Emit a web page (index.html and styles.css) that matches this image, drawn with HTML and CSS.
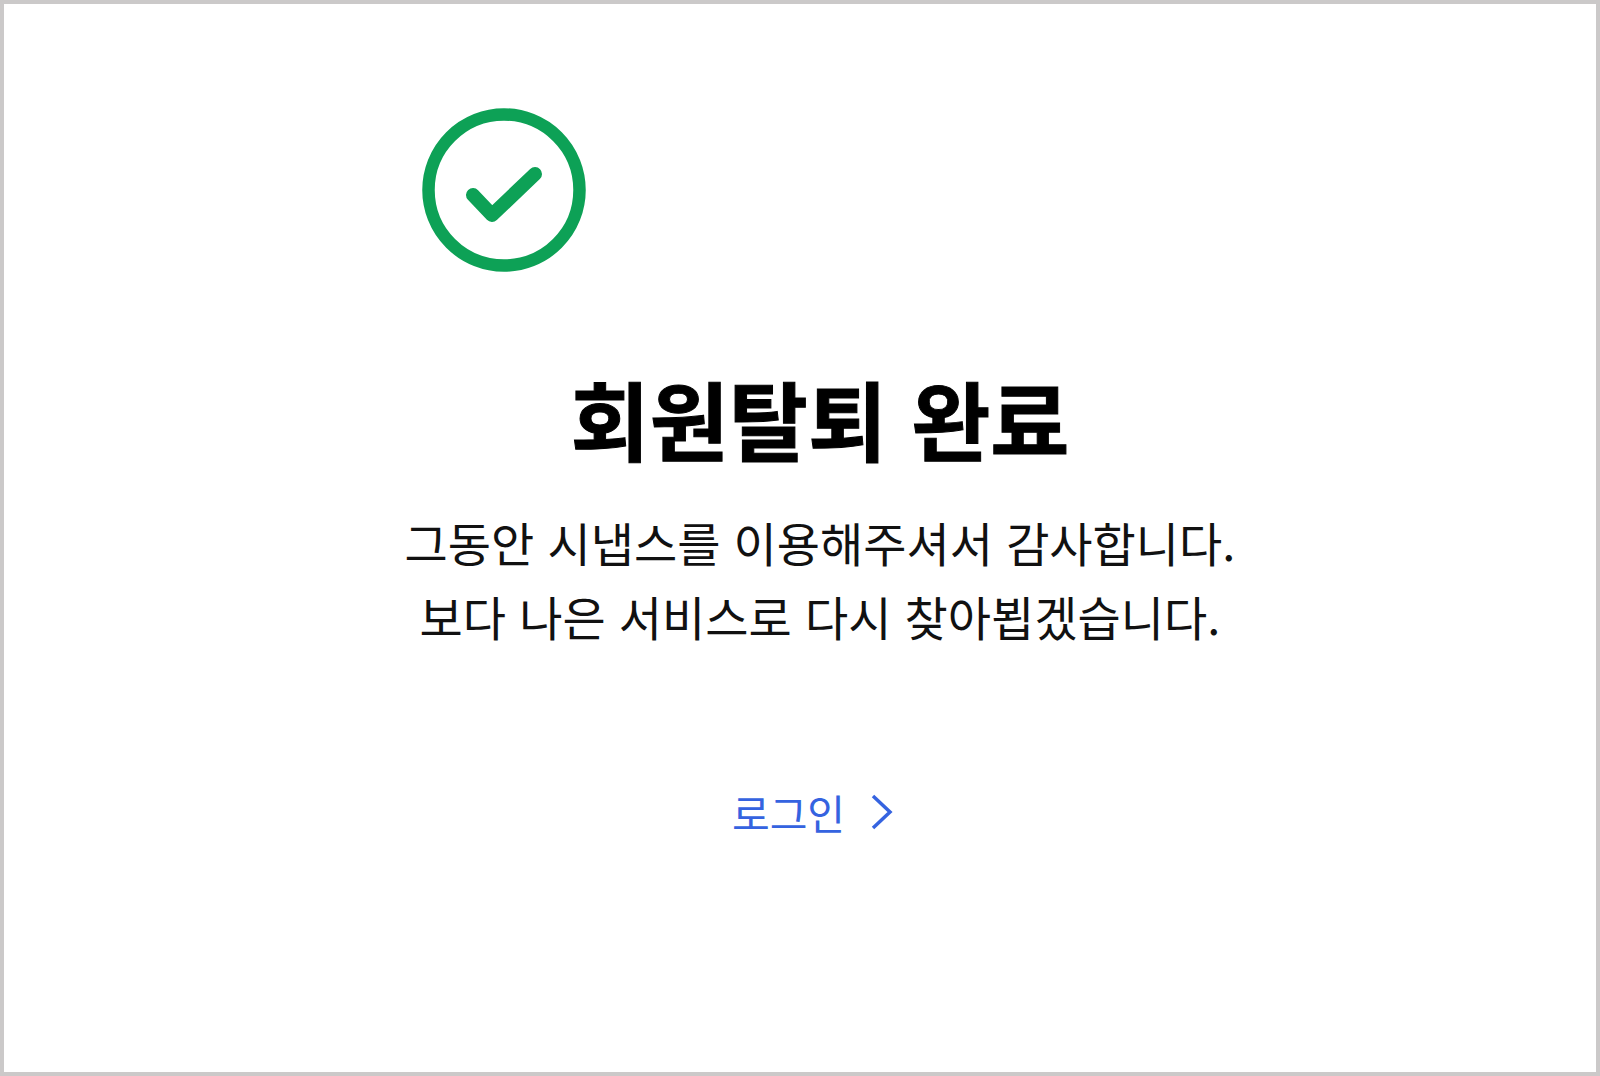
FILE: index.html
```html
<!DOCTYPE html>
<html lang="ko">
<head>
  <meta charset="UTF-8">
  <meta name="viewport" content="width=device-width, initial-scale=1.0">
  <title>회원탈퇴 완료</title>
  <link rel="stylesheet" href="styles.css">
</head>
<body>
  <main class="frame">
    <div class="icon-row">
      <svg class="check-icon" viewBox="0 0 164 164" aria-hidden="true">
        <circle cx="82" cy="82" r="75.5" fill="none" stroke="#0da156" stroke-width="12.5"/>
        <path d="M51 87 L70 107 L113 66" fill="none" stroke="#0da156" stroke-width="14" stroke-linecap="round" stroke-linejoin="round"/>
      </svg>
    </div>
    <h1 class="title">회원탈퇴 완료</h1>
    <p class="message">그동안 시냅스를 이용해주셔서 감사합니다.<br>보다 나은 서비스로 다시 찾아뵙겠습니다.</p>
    <a class="login-link" href="#">
      <span>로그인</span>
      <svg class="chevron" viewBox="0 0 24 38" aria-hidden="true">
        <path d="M3 3 L20 19 L3 35" fill="none" stroke="#3563e0" stroke-width="3.5"/>
      </svg>
    </a>
  </main>
</body>
</html>
```
FILE: styles.css
```css
* {
  box-sizing: border-box;
}
html, body {
  height: 100%;
}
body {
  margin: 0;
  font-family: "Noto Sans CJK KR", "Noto Sans", sans-serif;
  background-color: #fff;
  color: #111;
}
.frame {
  height: 100%;
  border: 4px solid #cbc9c9;
  padding: 104px 0 0 40px;
  display: flex;
  flex-direction: column;
  align-items: center;
}
.icon-row {
  width: 100%;
  padding-left: 378px;
}
.check-icon {
  display: block;
  width: 164px;
  height: 164px;
}
.title {
  margin: 82px 0 0;
  font-size: 86px;
  font-weight: 700;
  -webkit-text-stroke: 1px #000;
  line-height: 128px;
  color: #000;
}
.message {
  margin: 23px 0 0;
  font-size: 47px;
  line-height: 74px;
  text-align: center;
}
.login-link {
  margin: 129px 14px 0 0;
  display: flex;
  align-items: center;
  gap: 25px;
  font-size: 41px;
  line-height: 60px;
  color: #3563e0;
  text-decoration: none;
}
.chevron {
  width: 24px;
  height: 38px;
}
```
